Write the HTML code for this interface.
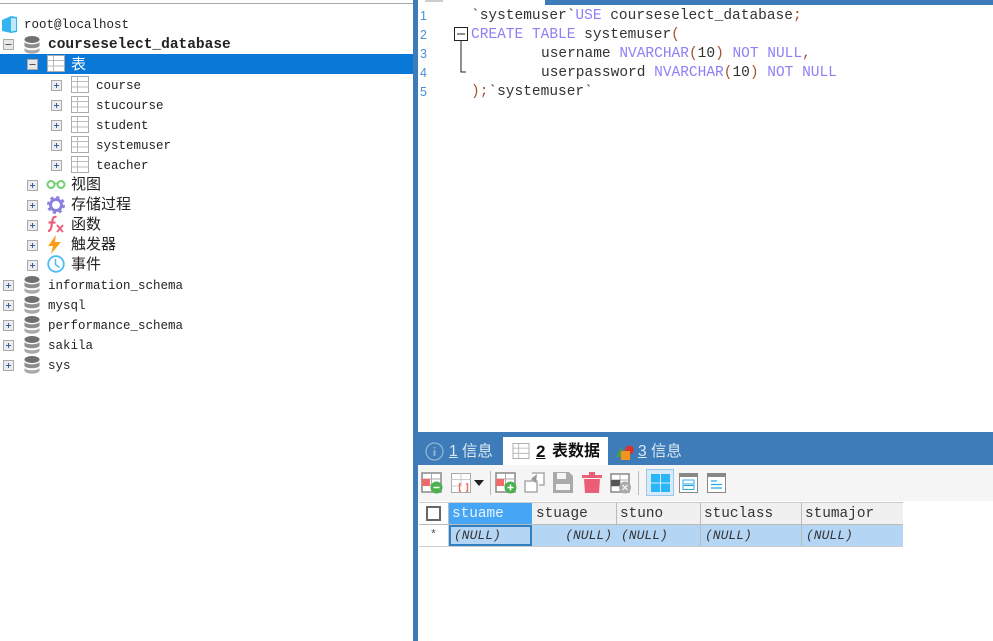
<!DOCTYPE html>
<html><head><meta charset="utf-8">
<style>
html,body{margin:0;padding:0;background:#fff}
#p{position:relative;width:993px;height:641px;overflow:hidden;background:#fff;filter:blur(.35px)}
#p div,#p span.a,#p svg.a{position:absolute}
.t{font:12.5px/20px "Liberation Mono",monospace;color:#222;white-space:pre;height:20px;margin-top:1px}
.z{font:15px/20px "Liberation Sans","Noto Sans CJK SC",sans-serif;color:#222;white-space:pre;margin-top:1px}
.c{font:14.5px/19px "Liberation Mono",monospace;color:#333;white-space:pre;left:471px;height:19px;margin-top:1px}
.k{color:#8d80f5}.o{color:#a5502f}
.n{font:12.5px/19px "Liberation Sans",sans-serif;color:#4a90d0;left:420px;margin-top:1px}
.h{font:14.4px/23px "Liberation Mono",monospace;color:#333;background:#f0f0f0;border-right:1px solid #bbb;border-bottom:1px solid #bbb;height:21px;top:503px;white-space:pre;padding-left:3px}
.r{font:italic 13px/21px "Liberation Mono",monospace;color:#333;background:#b5d5f5;border-right:1px solid #bbb;height:21px;top:525px;white-space:pre;padding-left:4px}
</style></head><body>
<div id="p">
<svg width="0" height="0" style="position:absolute">
<defs>
<symbol id="plus" viewBox="0 0 11 11"><rect x=".5" y=".5" width="10" height="10" fill="#ececec" stroke="#aaa"/><path d="M3 5.500h5M5.500 3v5" stroke="#3a5fa8" fill="none"/></symbol>
<symbol id="minus" viewBox="0 0 11 11"><rect x=".5" y=".5" width="10" height="10" fill="#e8e8e8" stroke="#aaa"/><path d="M2.500 5.500h6" stroke="#555" fill="none"/></symbol>
<symbol id="tbl" viewBox="0 0 18 17"><rect x=".5" y=".5" width="17" height="16" fill="#fff" stroke="#aaa"/><path d="M.5 5.500h17M.5 11h17M6.500 .5v16" stroke="#bbb" fill="none"/></symbol>
<symbol id="db" viewBox="0 0 16 18"><ellipse cx="8" cy="3.500" rx="7.500" ry="3.500" fill="#707070"/><path d="M.5 6c2 3 13 3 15 0v4c-2 3-13 3-15 0z" fill="#8e8e8e"/><path d="M.5 12c2 3 13 3 15 0v3c-2 3.500-13 3.500-15 0z" fill="#a8a8a8"/></symbol>
</defs>
</svg>

<!-- left pane -->
<div style="left:0;top:3px;width:413px;height:1px;background:#a8a8a8"></div>
<div style="left:0;top:54px;width:413px;height:20px;background:#0a78d7"></div>
<div style="left:413px;top:0;width:5px;height:641px;background:#3d7cb9"></div>

<svg class="a" style="left:1px;top:15px" width="17" height="19" viewBox="0 0 17 19"><path d="M1 5l9-4 6 1v15l-6 1-9-2z" fill="#35b5f0"/><path d="M10 3l5 .5v12l-5 1z" fill="#bfe8fb"/></svg>
<div class="t" style="left:24px;top:14px">root@localhost</div>

<svg class="a" style="left:3px;top:39px" width="11" height="11"><use href="#minus"/></svg>
<svg class="a" style="left:24px;top:36px" width="16" height="18"><use href="#db"/></svg>
<div class="t" style="left:48px;top:34px;font-weight:bold;font-size:14.500px">courseselect_database</div>

<svg class="a" style="left:27px;top:59px" width="11" height="11"><use href="#minus"/></svg>
<svg class="a" style="left:47px;top:55px" width="18" height="17"><use href="#tbl"/></svg>
<div class="z" style="left:71px;top:54px;color:#fff">表</div>

<svg class="a" style="left:51px;top:80px" width="11" height="11"><use href="#plus"/></svg>
<svg class="a" style="left:71px;top:76px" width="18" height="17"><use href="#tbl"/></svg>
<div class="t" style="left:96px;top:75px">course</div>
<svg class="a" style="left:51px;top:100px" width="11" height="11"><use href="#plus"/></svg>
<svg class="a" style="left:71px;top:96px" width="18" height="17"><use href="#tbl"/></svg>
<div class="t" style="left:96px;top:95px">stucourse</div>
<svg class="a" style="left:51px;top:120px" width="11" height="11"><use href="#plus"/></svg>
<svg class="a" style="left:71px;top:116px" width="18" height="17"><use href="#tbl"/></svg>
<div class="t" style="left:96px;top:115px">student</div>
<svg class="a" style="left:51px;top:140px" width="11" height="11"><use href="#plus"/></svg>
<svg class="a" style="left:71px;top:136px" width="18" height="17"><use href="#tbl"/></svg>
<div class="t" style="left:96px;top:135px">systemuser</div>
<svg class="a" style="left:51px;top:160px" width="11" height="11"><use href="#plus"/></svg>
<svg class="a" style="left:71px;top:156px" width="18" height="17"><use href="#tbl"/></svg>
<div class="t" style="left:96px;top:155px">teacher</div>

<svg class="a" style="left:27px;top:180px" width="11" height="11"><use href="#plus"/></svg>
<svg class="a" style="left:46px;top:178px" width="20" height="12" viewBox="0 0 20 12"><circle cx="5" cy="6.500" r="3.500" fill="none" stroke="#6fd06f" stroke-width="2"/><circle cx="15" cy="6.500" r="3.500" fill="none" stroke="#6fd06f" stroke-width="2"/><path d="M8 5.500h4" stroke="#6fd06f" stroke-width="1.500"/></svg>
<div class="z" style="left:71px;top:174px">视图</div>

<svg class="a" style="left:27px;top:200px" width="11" height="11"><use href="#plus"/></svg>
<svg class="a" style="left:47px;top:196px" width="18" height="18" viewBox="0 0 18 18"><circle cx="9" cy="9" r="5.500" fill="none" stroke="#8a80e0" stroke-width="3"/><circle cx="9" cy="9" r="7.500" fill="none" stroke="#8a80e0" stroke-width="3" stroke-dasharray="3 2.900"/></svg>
<div class="z" style="left:71px;top:194px">存储过程</div>

<svg class="a" style="left:27px;top:220px" width="11" height="11"><use href="#plus"/></svg>
<svg class="a" style="left:46px;top:215px" width="19" height="19" viewBox="0 0 19 19"><path d="M10.500 2C7 1 6.500 4 6 8c-.5 4-1 8-4 8M2.500 7.500h7" fill="none" stroke="#ee5f78" stroke-width="2.200"/><path d="M11 10l6 7M17 10l-6 7" stroke="#ee5f78" stroke-width="1.800"/></svg>
<div class="z" style="left:71px;top:214px">函数</div>

<svg class="a" style="left:27px;top:240px" width="11" height="11"><use href="#plus"/></svg>
<svg class="a" style="left:47px;top:235px" width="15" height="19" viewBox="0 0 15 19"><path d="M9 0L1 11h5l-2 8 10-12H8z" fill="#f9a01b"/></svg>
<div class="z" style="left:71px;top:234px">触发器</div>

<svg class="a" style="left:27px;top:260px" width="11" height="11"><use href="#plus"/></svg>
<svg class="a" style="left:47px;top:255px" width="18" height="18" viewBox="0 0 18 18"><circle cx="9" cy="9" r="7.800" fill="#fff" stroke="#4cbcf5" stroke-width="1.800"/><path d="M8.500 4v5.500l4 3" fill="none" stroke="#4cbcf5" stroke-width="1.500"/></svg>
<div class="z" style="left:71px;top:254px">事件</div>

<svg class="a" style="left:3px;top:280px" width="11" height="11"><use href="#plus"/></svg>
<svg class="a" style="left:24px;top:276px" width="16" height="18"><use href="#db"/></svg>
<div class="t" style="left:48px;top:275px">information_schema</div>
<svg class="a" style="left:3px;top:300px" width="11" height="11"><use href="#plus"/></svg>
<svg class="a" style="left:24px;top:296px" width="16" height="18"><use href="#db"/></svg>
<div class="t" style="left:48px;top:295px">mysql</div>
<svg class="a" style="left:3px;top:320px" width="11" height="11"><use href="#plus"/></svg>
<svg class="a" style="left:24px;top:316px" width="16" height="18"><use href="#db"/></svg>
<div class="t" style="left:48px;top:315px">performance_schema</div>
<svg class="a" style="left:3px;top:340px" width="11" height="11"><use href="#plus"/></svg>
<svg class="a" style="left:24px;top:336px" width="16" height="18"><use href="#db"/></svg>
<div class="t" style="left:48px;top:335px">sakila</div>
<svg class="a" style="left:3px;top:360px" width="11" height="11"><use href="#plus"/></svg>
<svg class="a" style="left:24px;top:356px" width="16" height="18"><use href="#db"/></svg>
<div class="t" style="left:48px;top:355px">sys</div>

<!-- editor -->
<div style="left:545px;top:0;width:448px;height:5px;background:#3d7cb9"></div>
<div style="left:425px;top:0;width:18px;height:2px;background:#ccc"></div>
<div class="n" style="top:6px">1</div>
<div class="n" style="top:25px">2</div>
<div class="n" style="top:44px">3</div>
<div class="n" style="top:63px">4</div>
<div class="n" style="top:82px">5</div>
<div class="c" style="top:6px">`systemuser`<span class="k">USE</span> courseselect_database<span class="o">;</span></div>
<div class="c" style="top:25px"><span class="k">CREATE</span> <span class="k">TABLE</span> systemuser<span class="o">(</span></div>
<div class="c" style="top:44px;left:541px">username <span class="k">NVARCHAR</span><span class="o">(</span>10<span class="o">)</span> <span class="k">NOT</span> <span class="k">NULL</span><span class="o">,</span></div>
<div class="c" style="top:63px;left:541px">userpassword <span class="k">NVARCHAR</span><span class="o">(</span>10<span class="o">)</span> <span class="k">NOT</span> <span class="k">NULL</span></div>
<div class="c" style="top:82px"><span class="o">);</span>`systemuser`</div>
<svg class="a" style="left:454px;top:27px" width="16" height="46" viewBox="0 0 16 46"><rect x=".5" y=".5" width="13" height="13" fill="#fff" stroke="#222"/><path d="M3 7h8M7 14v31h5" fill="none" stroke="#222"/></svg>

<!-- bottom bar -->
<div style="left:418px;top:432px;width:575px;height:33px;background:#3d7cb9"></div>
<div style="left:503px;top:437px;width:105px;height:28px;background:#fff"></div>
<svg class="a" style="left:425px;top:442px" width="19" height="19" viewBox="0 0 19 19"><circle cx="9.500" cy="9.500" r="8.500" fill="none" stroke="#8fb3d3" stroke-width="1.300"/><path d="M9.500 8v6M9.500 5v1.500" stroke="#8fb3d3" stroke-width="2"/></svg>
<div class="z" style="left:449px;top:441px;color:#dce8f3;font-size:15.500px"><span style="text-decoration:underline">1</span> 信息</div>
<svg class="a" style="left:512px;top:443px" width="18" height="16"><use href="#tbl"/></svg>
<div class="z" style="left:536px;top:441px;color:#111;font-weight:bold;font-size:17px"><span style="text-decoration:underline">2</span></div>
<div class="z" style="left:552px;top:441px;color:#111;font-weight:bold;font-size:16px">表数据</div>
<svg class="a" style="left:616px;top:445px" width="19" height="16" viewBox="0 0 19 16"><path d="M5 2L0 12h9z" fill="#4aa04a"/><circle cx="13.500" cy="5" r="4.500" fill="#d6352f"/><rect x="5" y="6" width="9" height="9" fill="#f2941e"/></svg>
<div class="z" style="left:638px;top:441px;color:#dce8f3;font-size:15.500px"><span style="text-decoration:underline">3</span> 信息</div>

<!-- toolbar -->
<div style="left:418px;top:465px;width:575px;height:36px;background:#f5f5f5"></div>
<svg class="a" style="left:421px;top:472px" width="22" height="22" viewBox="0 0 22 22"><rect x="1" y="1" width="19" height="19" fill="#fff" stroke="#888" stroke-width="1.500"/><path d="M1 7h19M1 13h19M10.500 1v19" stroke="#aaa"/><rect x="1" y="7" width="8" height="7" fill="#ef6a6a"/><circle cx="15.500" cy="15.500" r="6" fill="#4cb050"/><path d="M12.500 15.500h6" stroke="#fff" stroke-width="1.500"/></svg>
<svg class="a" style="left:451px;top:473px" width="21" height="21" viewBox="0 0 21 21"><rect x=".5" y=".5" width="19" height="19" fill="#fff" stroke="#aaa"/><path d="M.5 6.500h19M.5 13h10M10 .5v12" stroke="#ccc"/><path d="M10 11H8.500v7H10M15 11h1.500v7H15" fill="none" stroke="#ef6a55" stroke-width="1.400"/></svg>
<svg class="a" style="left:474px;top:480px" width="10" height="6"><path d="M0 0h10L5 6z" fill="#222"/></svg>
<div style="left:490px;top:471px;width:1px;height:24px;background:#bbb"></div>
<svg class="a" style="left:495px;top:472px" width="22" height="22" viewBox="0 0 22 22"><rect x="1" y="1" width="19" height="19" fill="#fff" stroke="#888" stroke-width="1.500"/><path d="M1 7h19M1 13h19M10.500 1v19" stroke="#aaa"/><rect x="1" y="7" width="8" height="7" fill="#ef6a6a"/><circle cx="15.500" cy="15.500" r="6" fill="#4cb050"/><path d="M12.500 15.500h6M15.500 12.500v6" stroke="#fff" stroke-width="1.500"/></svg>
<svg class="a" style="left:524px;top:472px" width="21" height="21" viewBox="0 0 21 21"><path d="M8 1h12v12h-5M1 9h12v11H1z" fill="#fff" stroke="#aaa" stroke-width="1.500"/><path d="M13 2L7 7l5 4z" fill="#999"/></svg>
<svg class="a" style="left:553px;top:472px" width="20" height="21" viewBox="0 0 20 21"><path d="M0 0h16l4 4v17H0z" fill="#aaa"/><rect x="4" y="1" width="9" height="6" fill="#f5f5f5"/><rect x="3" y="12" width="14" height="6" fill="#f5f5f5"/></svg>
<svg class="a" style="left:582px;top:472px" width="20" height="21" viewBox="0 0 20 21"><path d="M0 3h7V0h6v3h7v3H0zM2 7h16l-1 14H3z" fill="#ea5f76"/></svg>
<svg class="a" style="left:610px;top:473px" width="22" height="21" viewBox="0 0 22 21"><rect x="1" y="1" width="18" height="18" fill="#fff" stroke="#888" stroke-width="1.500"/><path d="M1 7h18M1 13h18M10 1v18" stroke="#aaa"/><rect x="1" y="7" width="9" height="6" fill="#555"/><circle cx="15" cy="14.500" r="6" fill="#aaa"/><path d="M12.500 12l5 5M17.500 12l-5 5" stroke="#eee" stroke-width="1.500"/></svg>
<div style="left:638px;top:471px;width:1px;height:24px;background:#bbb"></div>
<div style="left:646px;top:469px;width:28px;height:27px;background:#d8eafa;border:1px solid #9cc8ee;box-sizing:border-box"></div>
<svg class="a" style="left:651px;top:474px" width="19" height="18" viewBox="0 0 19 18"><path d="M0 0h9v8.500H0zM10 0h9v8.500h-9zM0 9.500h9V18H0zM10 9.500h9V18h-9z" fill="#29b6f6"/></svg>
<svg class="a" style="left:679px;top:473px" width="19" height="20" viewBox="0 0 19 20"><rect x=".5" y=".5" width="18" height="19" fill="#fff" stroke="#888"/><rect x="0" y="0" width="19" height="4" fill="#888"/><rect x="4" y="7" width="11" height="4" fill="none" stroke="#29a8ee"/><rect x="4" y="12.500" width="11" height="4" fill="none" stroke="#29a8ee"/></svg>
<svg class="a" style="left:707px;top:473px" width="19" height="20" viewBox="0 0 19 20"><rect x=".5" y=".5" width="18" height="19" fill="#fff" stroke="#888"/><rect x="0" y="0" width="19" height="4" fill="#888"/><path d="M4 8h6M4 11.500h11M4 15h11" stroke="#29a8ee" stroke-width="1.200"/></svg>

<!-- grid -->
<div style="left:419px;top:502px;width:484px;height:45px;background:#ccc"></div>
<div class="h" style="left:419px;width:29px;padding:0;background:#fff"></div>
<div style="left:426px;top:506px;width:15px;height:15px;border:2px solid #666;box-sizing:border-box;background:#fff"></div>
<div class="h" style="left:449px;width:80px;background:#46a5f5;color:#e8f4ff;border-right:0">stuame</div>
<div class="h" style="left:532px;width:80px;padding-left:4px;border-left:0">stuage</div>
<div class="h" style="left:617px;width:80px">stuno</div>
<div class="h" style="left:701px;width:97px">stuclass</div>
<div class="h" style="left:802px;width:98px;border-right:0">stumajor</div>
<div style="left:419px;top:525px;width:29px;height:21px;background:#fff;font:12px/21px 'Liberation Mono',monospace;text-align:center;color:#555">*</div>
<div class="r" style="left:532px;width:80px;padding:0 5px 0 0;text-align:right">(NULL)</div>
<div class="r" style="left:617px;width:79px;">(NULL)</div>
<div class="r" style="left:701px;width:96px">(NULL)</div>
<div class="r" style="left:802px;width:97px;border-right:0">(NULL)</div>
<div class="r" style="left:449px;top:525px;width:76px;height:17px;padding:0 0 0 3px;border:2px solid #2f7fc4;line-height:18px">(NULL)</div>
</div>
</body></html>
